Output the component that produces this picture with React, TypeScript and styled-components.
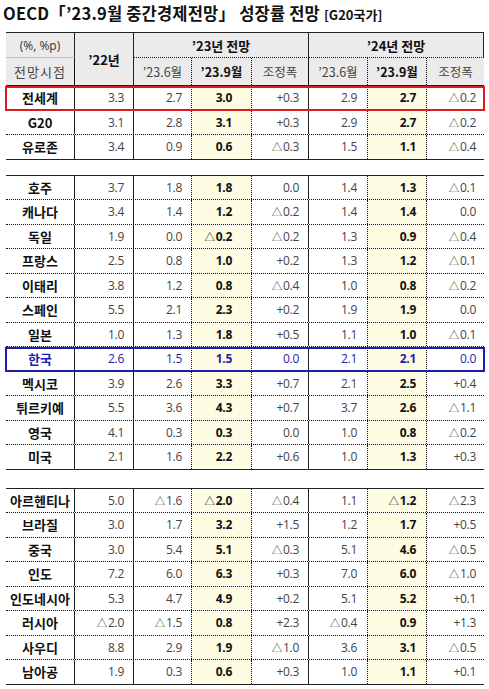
import styled, { createGlobalStyle } from "styled-components";

// 컬럼 폭과 우측 여백 (1열은 국가명)
const COLS = "69px 59px 58px 60px 57px 59px 59px 57px";
const PAD = [0, 9, 9, 19, 9, 10, 10, 8];
// 세로선 종류
const VLINE = ["solid", "solid", "dotted", "dotted", "solid", "dotted", "dotted", "none"];
// 굵게 + 노란 배경 컬럼
const HIGHLIGHT_COLS = [3, 6];

type Row = { name: string; v: string[]; box?: "red" | "blue" };

const groups: Row[][] = [
  [
    { name: "전세계", v: ["3.3", "2.7", "3.0", "+0.3", "2.9", "2.7", "△0.2"], box: "red" },
    { name: "G20", v: ["3.1", "2.8", "3.1", "+0.3", "2.9", "2.7", "△0.2"] },
    { name: "유로존", v: ["3.4", "0.9", "0.6", "△0.3", "1.5", "1.1", "△0.4"] },
  ],
  [
    { name: "호주", v: ["3.7", "1.8", "1.8", "0.0", "1.4", "1.3", "△0.1"] },
    { name: "캐나다", v: ["3.4", "1.4", "1.2", "△0.2", "1.4", "1.4", "0.0"] },
    { name: "독일", v: ["1.9", "0.0", "△0.2", "△0.2", "1.3", "0.9", "△0.4"] },
    { name: "프랑스", v: ["2.5", "0.8", "1.0", "+0.2", "1.3", "1.2", "△0.1"] },
    { name: "이태리", v: ["3.8", "1.2", "0.8", "△0.4", "1.0", "0.8", "△0.2"] },
    { name: "스페인", v: ["5.5", "2.1", "2.3", "+0.2", "1.9", "1.9", "0.0"] },
    { name: "일본", v: ["1.0", "1.3", "1.8", "+0.5", "1.1", "1.0", "△0.1"] },
    { name: "한국", v: ["2.6", "1.5", "1.5", "0.0", "2.1", "2.1", "0.0"], box: "blue" },
    { name: "멕시코", v: ["3.9", "2.6", "3.3", "+0.7", "2.1", "2.5", "+0.4"] },
    { name: "튀르키예", v: ["5.5", "3.6", "4.3", "+0.7", "3.7", "2.6", "△1.1"] },
    { name: "영국", v: ["4.1", "0.3", "0.3", "0.0", "1.0", "0.8", "△0.2"] },
    { name: "미국", v: ["2.1", "1.6", "2.2", "+0.6", "1.0", "1.3", "+0.3"] },
  ],
  [
    { name: "아르헨티나", v: ["5.0", "△1.6", "△2.0", "△0.4", "1.1", "△1.2", "△2.3"] },
    { name: "브라질", v: ["3.0", "1.7", "3.2", "+1.5", "1.2", "1.7", "+0.5"] },
    { name: "중국", v: ["3.0", "5.4", "5.1", "△0.3", "5.1", "4.6", "△0.5"] },
    { name: "인도", v: ["7.2", "6.0", "6.3", "+0.3", "7.0", "6.0", "△1.0"] },
    { name: "인도네시아", v: ["5.3", "4.7", "4.9", "+0.2", "5.1", "5.2", "+0.1"] },
    { name: "러시아", v: ["△2.0", "△1.5", "0.8", "+2.3", "△0.4", "0.9", "+1.3"] },
    { name: "사우디", v: ["8.8", "2.9", "1.9", "△1.0", "3.6", "3.1", "△0.5"] },
    { name: "남아공", v: ["1.9", "0.3", "0.6", "+0.3", "1.0", "1.1", "+0.1"] },
  ],
];

const BOX_COLOR = { red: "#e01b1f", blue: "#1d1daa" };

// △ 표시는 작은 글리프로 따로 그림
const renderValue = (val: string) =>
  val.startsWith("△") ? (
    <>
      <Tri>△</Tri>
      {val.slice(1)}
    </>
  ) : (
    val
  );

const App = () => {
  return (
    <Page>
      <GlobalStyle />
      <Title>
        OECD「’23.9월 중간경제전망」 성장률 전망 <Small>[G20국가]</Small>
      </Title>

      {/* 헤더 */}
      <Header>
        <UnitCell>(%, %p)</UnitCell>
        <HeadCell $col={1} $row="1 / span 2" $bold>
          ’22년
        </HeadCell>
        <GroupCell $col="3 / span 3">’23년 전망</GroupCell>
        <GroupCell $col="6 / span 3">’24년 전망</GroupCell>
        <SubCell $col={0} $row="2">
          전망시점
        </SubCell>
        <SubCell $col={2} $row="2">’23.6월</SubCell>
        <SubCell $col={3} $row="2" $bold>’23.9월</SubCell>
        <SubCell $col={4} $row="2">조정폭</SubCell>
        <SubCell $col={5} $row="2">’23.6월</SubCell>
        <SubCell $col={6} $row="2" $bold>’23.9월</SubCell>
        <SubCell $col={7} $row="2">조정폭</SubCell>
      </Header>

      {/* 본문 */}
      {groups.map((rows, gi) => (
        <Group key={gi}>
          {gi > 0 && <Spacer $h={gi === 1 ? 15 : 18} />}
          {rows.map((r, ri) => (
            <BodyRow key={r.name} $last={ri === rows.length - 1} $box={r.box}>
              <NameCell $col={0} $blue={r.box === "blue"}>
                {r.name}
              </NameCell>
              {r.v.map((val, i) => (
                <NumCell
                  key={i}
                  $col={i + 1}
                  $hl={HIGHLIGHT_COLS.includes(i + 1)}
                  $blue={r.box === "blue"}
                >
                  {renderValue(val)}
                </NumCell>
              ))}
            </BodyRow>
          ))}
        </Group>
      ))}
    </Page>
  );
};

const GlobalStyle = createGlobalStyle`
  body {
    margin: 0;
    background: #fff;
    font-family: "Open Sans", "Noto Sans CJK KR", sans-serif;
  }
`;

const Page = styled.div`
  width: 489px;
  padding: 3px 5px 0 6px;
  box-sizing: border-box;
`;

const Title = styled.h1`
  margin: 0 0 7px -3px;
  height: 22px;
  font-family: "Noto Sans CJK KR", sans-serif;
  font-weight: 700;
  font-size: 16.5px;
  line-height: 20px;
  letter-spacing: 0.2px;
  color: #111;
  white-space: nowrap;
`;

const Small = styled.span`
  font-size: 13px;
  letter-spacing: 0;
`;

const Header = styled.div`
  display: grid;
  grid-template-columns: ${COLS};
  grid-template-rows: 25px 27px;
  background: #ebebeb;
  border-top: 1px solid #222;
  border-bottom: 1px solid #222;
  font-family: "Noto Sans CJK KR", sans-serif;
  font-size: 12px;
  color: #333;
`;

const cellBase = `
  display: flex;
  align-items: center;
  box-sizing: border-box;
  white-space: nowrap;
`;

const UnitCell = styled.div`
  ${cellBase}
  grid-column: 1;
  grid-row: 1;
  justify-content: center;
  border-right: 1px solid #222;
  border-bottom: 1px solid #bdbdbd;
  font-family: "Open Sans", "Noto Sans CJK KR", sans-serif;
  font-size: 12px;
`;

const HeadCell = styled.div<{ $col: number; $row: string; $bold?: boolean }>`
  ${cellBase}
  grid-column: ${(p) => p.$col + 1};
  grid-row: ${(p) => p.$row};
  justify-content: center;
  border-right: 1px ${(p) => VLINE[p.$col]} #222;
  font-weight: ${(p) => (p.$bold ? 700 : 400)};
  font-size: 13px;
  color: #111;
`;

const GroupCell = styled.div<{ $col: string }>`
  ${cellBase}
  grid-column: ${(p) => p.$col};
  grid-row: 1;
  justify-content: center;
  border-right: 1px solid #222;
  border-bottom: 1px dotted #111;
  font-weight: 700;
  font-size: 13px;
  color: #111;
  &:last-of-type {
    border-right: none;
  }
`;

const SubCell = styled.div<{ $col: number; $row: string; $bold?: boolean }>`
  ${cellBase}
  grid-column: ${(p) => p.$col + 1};
  grid-row: ${(p) => p.$row};
  justify-content: center;
  border-right: ${(p) => (VLINE[p.$col] === "none" ? "none" : `1px ${VLINE[p.$col]} #111`)};
  font-weight: ${(p) => (p.$bold ? 700 : 400)};
  font-size: ${(p) => (p.$col === 0 ? 13 : 12.5)}px;
  letter-spacing: ${(p) => (p.$col === 0 ? "1px" : "0")};
  color: ${(p) => (p.$bold ? "#111" : "#444")};
`;

const Group = styled.div`
  display: flex;
  flex-direction: column;
`;

const Spacer = styled.div<{ $h: number }>`
  height: ${(p) => p.$h}px;
  border-bottom: 1px solid #222;
`;

const BodyRow = styled.div<{ $last: boolean; $box?: "red" | "blue" }>`
  position: relative;
  display: grid;
  grid-template-columns: ${COLS};
  height: 24.5px;
  border-bottom: 1px ${(p) => (p.$last ? "solid #222" : "dotted #111")};
  box-sizing: border-box;

  &::after {
    content: "";
    display: ${(p) => (p.$box ? "block" : "none")};
    position: absolute;
    top: 0;
    left: -1px;
    right: -1px;
    bottom: -1px;
    border: 2px solid ${(p) => (p.$box ? BOX_COLOR[p.$box] : "transparent")};
    pointer-events: none;
  }
`;

const NameCell = styled.div<{ $col: number; $blue: boolean }>`
  ${cellBase}
  justify-content: center;
  border-right: 1px solid #222;
  font-family: "Noto Sans CJK KR", sans-serif;
  font-weight: 700;
  font-size: 13px;
  color: ${(p) => (p.$blue ? "#1d1daa" : "#111")};
`;

const NumCell = styled.div<{ $col: number; $hl: boolean; $blue: boolean }>`
  ${cellBase}
  justify-content: flex-end;
  padding-right: ${(p) => PAD[p.$col]}px;
  border-right: ${(p) => (VLINE[p.$col] === "none" ? "none" : `1px ${VLINE[p.$col]} ${VLINE[p.$col] === "solid" ? "#222" : "#111"}`)};
  background: ${(p) => (p.$hl ? "#fffce4" : "transparent")};
  font-size: 12px;
  font-weight: ${(p) => (p.$hl ? 700 : 400)};
  color: ${(p) => (p.$blue ? "#1d1daa" : p.$hl ? "#111" : "#444")};
  letter-spacing: -0.3px;
`;

const Tri = styled.span`
  font-family: "Noto Sans CJK KR", sans-serif;
  font-size: 10.5px;
  font-weight: 400;
  margin-right: 1px;
`;

export default App;
